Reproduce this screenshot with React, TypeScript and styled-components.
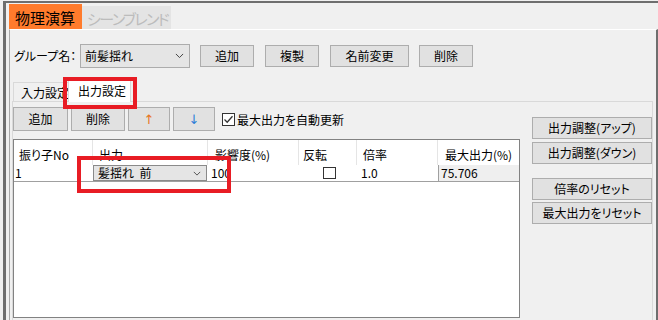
import React from "react";
import styled, { createGlobalStyle } from "styled-components";

const Global = createGlobalStyle`
  html, body { margin: 0; padding: 0; background: #f0f0f0; }
  body {
    font-family: "Noto Sans CJK JP", "Noto Sans", sans-serif;
    font-size: 12px;
    color: #000;
    font-feature-settings: "palt";
  }
  * { box-sizing: border-box; }
`;

const Frame = styled.div`
  position: relative;
  width: 658px;
  height: 320px;
  overflow: hidden;
  background: #f0f0f0;
  padding-top: 1px;
`;

const Window = styled.div`
  margin-left: 3px;
  height: 319px;
  border-left: 3px solid #6e6e6e;
  border-top: 2px solid #6e6e6e;
  display: flex;
  flex-direction: column;
`;

const TabStrip = styled.div`
  height: 26px;
  display: flex;
  align-items: flex-end;
  padding-left: 3px;
`;

const TopTab = styled.div<{ $active?: boolean }>`
  height: ${(p) => (p.$active ? 25 : 23)}px;
  width: ${(p) => (p.$active ? 73 : 89)}px;
  padding-left: ${(p) => (p.$active ? 6 : 5)}px;
  background: ${(p) => (p.$active ? "#ff7b2c" : "#e4e4e4")};
  color: ${(p) => (p.$active ? "#000" : "#bcbcbc")};
  font-size: 15px;
  letter-spacing: ${(p) => (p.$active ? 0 : -1.6)}px;
  line-height: ${(p) => (p.$active ? 27 : 25)}px;
  white-space: nowrap;
`;

const Page = styled.div`
  flex: 1;
  margin-left: 3px;
  border-left: 1px solid #a9a9a9;
  border-right: 2px solid #6e6e6e;
  border-top: 1px solid #ffffff;
  display: flex;
  flex-direction: column;
  min-height: 0;
`;

const GroupRow = styled.div`
  display: flex;
  align-items: center;
  padding: 14px 0 0 4px;
  height: 38px;
`;

const Label = styled.span`
  width: 66px;
  white-space: nowrap;
  line-height: 24px;
`;

const Combo = styled.div<{ $w: number; $h: number; $border: string }>`
  width: ${(p) => p.$w}px;
  height: ${(p) => p.$h}px;
  border: 1px solid ${(p) => p.$border};
  background: #e5e5e5;
  display: flex;
  align-items: center;
  justify-content: space-between;
  padding: 0 5px 0 4px;
  white-space: nowrap;
  line-height: 1;
`;

const Button = styled.button<{ $w: number; $h?: number; $gap?: number }>`
  width: ${(p) => p.$w}px;
  height: ${(p) => p.$h ?? 22}px;
  margin-left: ${(p) => p.$gap ?? 0}px;
  border: 1px solid #adadad;
  background: #e1e1e1;
  font: inherit;
  font-size: 12px;
  color: #000;
  padding: 0;
  display: flex;
  align-items: center;
  justify-content: center;
  white-space: nowrap;
  line-height: 1;
`;

const InnerTabs = styled.div`
  margin-top: 10px;
  height: 23px;
  display: flex;
  align-items: flex-end;
  padding-left: 3px;
  position: relative;
  z-index: 1;
`;

const InnerTab = styled.div<{ $active?: boolean }>`
  height: ${(p) => (p.$active ? 23 : 19)}px;
  width: ${(p) => (p.$active ? 63 : 60)}px;
  margin-left: ${(p) => (p.$active ? -5 : 0)}px;
  margin-bottom: ${(p) => (p.$active ? -1 : 0)}px;
  padding-left: ${(p) => (p.$active ? 9 : 7)}px;
  background: ${(p) => (p.$active ? "#ffffff" : "#f0f0f0")};
  border: 1px solid #d9d9d9;
  border-bottom: none;
  position: relative;
  z-index: ${(p) => (p.$active ? 2 : 1)};
  line-height: ${(p) => (p.$active ? 22 : 20)}px;
  white-space: nowrap;
  overflow: hidden;
`;

const InnerPage = styled.div`
  flex: 1;
  margin: 0 3px 0 2px;
  border: 1px solid #d9d9d9;
  border-bottom: none;
  display: flex;
  min-height: 0;
`;

const LeftCol = styled.div`
  width: 507px;
  padding-top: 5px;
  display: flex;
  flex-direction: column;
`;

const RightCol = styled.div`
  width: 120px;
  margin-left: 12px;
  padding-top: 15px;
  display: flex;
  flex-direction: column;
`;

const SideButton = styled(Button)<{ $top: number }>`
  margin-top: ${(p) => p.$top}px;
  margin-left: 0;
`;

const Toolbar = styled.div`
  display: flex;
  align-items: center;
  height: 24px;
`;

const Arrow = styled.span<{ $color: string }>`
  color: ${(p) => p.$color};
  font-family: "DejaVu Sans", sans-serif;
  font-size: 13px;
`;

const CheckWrap = styled.label`
  display: flex;
  align-items: center;
  margin-left: 7px;
  white-space: nowrap;
`;

const Box = styled.span`
  width: 13px;
  height: 13px;
  border: 1px solid #333;
  background: #fff;
  display: inline-flex;
  align-items: center;
  justify-content: center;
  margin-right: 2px;
`;

const Grid = styled.div`
  margin-top: 8px;
  height: 179px;
  border: 1px solid #828282;
  background: #fff;
`;

const cols = "79px 115px 91px 58px 81px 81px";

const HeaderRow = styled.div`
  display: grid;
  grid-template-columns: ${cols};
  height: 25px;
`;

const HeaderCell = styled.div<{ $pad: number; $last?: boolean }>`
  padding-left: ${(p) => p.$pad}px;
  padding-top: 7px;
  border-right: ${(p) => (p.$last ? "none" : "1px solid #e5e5e5")};
  white-space: nowrap;
  line-height: 16px;
`;

const DataRow = styled.div`
  display: grid;
  grid-template-columns: ${cols};
  height: 17px;
  border-bottom: 1px solid #a0a0a0;
`;

const DataCell = styled.div<{ $pad?: number; $shade?: boolean; $center?: boolean }>`
  padding-left: ${(p) => p.$pad ?? 0}px;
  background: ${(p) => (p.$shade ? "#efefef" : "#fff")};
  border-left: ${(p) => (p.$shade ? "1px solid #a0a0a0" : "none")};
  display: flex;
  align-items: center;
  justify-content: ${(p) => (p.$center ? "center" : "flex-start")};
  white-space: nowrap;
  overflow: hidden;
  line-height: 16px;
`;

const SmallBox = styled.span`
  width: 13px;
  height: 12px;
  border: 1px solid #333;
  background: #fff;
  margin-left: 2px;
`;

const Highlight = styled.div<{ $x: number; $y: number; $w: number; $h: number }>`
  position: absolute;
  left: ${(p) => p.$x}px;
  top: ${(p) => p.$y}px;
  width: ${(p) => p.$w}px;
  height: ${(p) => p.$h}px;
  border: 4px solid #e81c24;
  z-index: 10;
  pointer-events: none;
`;

const Chevron = ({ size = 9 }: { size?: number }) => (
  <svg width={size} height={size / 2 + 1} viewBox="0 0 10 6">
    <polyline points="1,1 5,5 9,1" fill="none" stroke="#444" strokeWidth="1.1" />
  </svg>
);

export default function App() {
  return (
    <>
      <Global />
      <Frame>
        <Window>
          <TabStrip>
            <TopTab $active>物理演算</TopTab>
            <TopTab>シーンブレンド</TopTab>
          </TabStrip>
          <Page>
            <GroupRow>
              <Label>グループ名：</Label>
              <Combo $w={110} $h={24} $border="#acacac">
                <span>前髪揺れ</span>
                <Chevron />
              </Combo>
              <Button $w={54} $gap={10}>追加</Button>
              <Button $w={54} $gap={11}>複製</Button>
              <Button $w={79} $gap={11}>名前変更</Button>
              <Button $w={54} $gap={10}>削除</Button>
            </GroupRow>
            <InnerTabs>
              <InnerTab>入力設定</InnerTab>
              <InnerTab $active>出力設定</InnerTab>
            </InnerTabs>
            <InnerPage>
              <LeftCol>
                <Toolbar>
                  <Button $w={55} $h={24}>追加</Button>
                  <Button $w={54} $h={24} $gap={3}>削除</Button>
                  <Button $w={42} $h={24} $gap={3}>
                    <Arrow $color="#e8761e">↑</Arrow>
                  </Button>
                  <Button $w={42} $h={24} $gap={3}>
                    <Arrow $color="#2f7fd8">↓</Arrow>
                  </Button>
                  <CheckWrap>
                    <Box>
                      <svg width="11" height="11" viewBox="0 0 11 11">
                        <polyline points="1.5,5.5 4.2,8.2 9.5,2.2" fill="none" stroke="#333" strokeWidth="1.3" />
                      </svg>
                    </Box>
                    最大出力を自動更新
                  </CheckWrap>
                </Toolbar>
                <Grid>
                  <HeaderRow>
                    <HeaderCell $pad={5}>振り子No</HeaderCell>
                    <HeaderCell $pad={6}>出力</HeaderCell>
                    <HeaderCell $pad={7}>影響度(%)</HeaderCell>
                    <HeaderCell $pad={4}>反転</HeaderCell>
                    <HeaderCell $pad={6}>倍率</HeaderCell>
                    <HeaderCell $pad={7} $last>最大出力(%)</HeaderCell>
                  </HeaderRow>
                  <DataRow>
                    <DataCell $pad={1}>1</DataCell>
                    <DataCell>
                      <Combo $w={114} $h={16} $border="#8a8a8a">
                        <span>髪揺れ&nbsp;&nbsp;前</span>
                        <Chevron size={8} />
                      </Combo>
                    </DataCell>
                    <DataCell $pad={3}>100</DataCell>
                    <DataCell $center>
                      <SmallBox />
                    </DataCell>
                    <DataCell $pad={4}>1.0</DataCell>
                    <DataCell $pad={2} $shade>75.706</DataCell>
                  </DataRow>
                </Grid>
              </LeftCol>
              <RightCol>
                <SideButton $w={120} $top={0}>出力調整(アップ)</SideButton>
                <SideButton $w={120} $top={3}>出力調整(ダウン)</SideButton>
                <SideButton $w={120} $top={14}>倍率のリセット</SideButton>
                <SideButton $w={120} $top={2}>最大出力をリセット</SideButton>
              </RightCol>
            </InnerPage>
          </Page>
        </Window>
        <Highlight $x={63} $y={77} $w={74} $h={32} />
        <Highlight $x={77} $y={156} $w={154} $h={37} />
      </Frame>
    </>
  );
}
